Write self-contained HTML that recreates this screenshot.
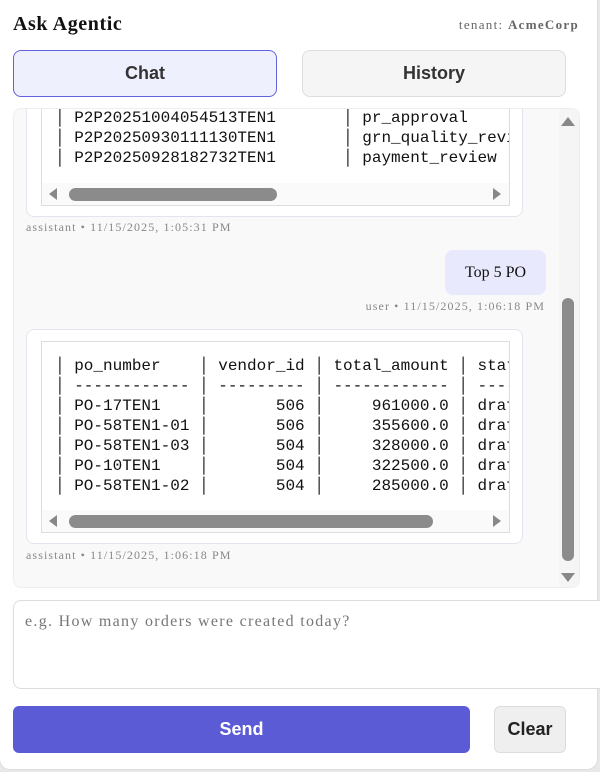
<!DOCTYPE html>
<html><head><meta charset="utf-8"><style>
*{box-sizing:border-box;margin:0;padding:0}
body{width:600px;height:772px;background:#e9e9e9;position:relative;overflow:hidden;font-family:"Liberation Serif",serif}
.panel{position:absolute;left:0;top:-10px;width:597px;height:779px;background:#fff;border-radius:10px;box-shadow:0 0 2px rgba(0,0,0,.15)}
.a{position:absolute}
.tab{position:absolute;top:50px;height:47px;border-radius:8px;font:bold 18px "Liberation Sans",sans-serif;color:#333;display:flex;align-items:center;justify-content:center}
.chat{left:13px;top:108px;width:567px;height:480px;background:#f9f9f9;border:1px solid #eee;border-radius:8px;overflow:hidden}
.bub{position:absolute;left:12px;width:497px;background:#fff;border:1px solid #e4e4ee;border-radius:8px}
.pre{position:absolute;left:14px;width:469px;border:1px solid #ddd;background:#fff;overflow:hidden}
.pre pre{font:16px/20px "Liberation Mono",monospace;color:#111;position:absolute;left:13px;white-space:pre}
.hs{position:absolute;left:0;right:0;bottom:0;height:22px;background:#fafafa}
.hs .th{position:absolute;left:27px;top:5px;height:13px;background:#8b8b8b;border-radius:7px}
.meta{position:absolute;font-size:12px;color:#888;letter-spacing:1.1px}
.tri-l{position:absolute;left:7px;top:5px;width:0;height:0;border-top:6px solid transparent;border-bottom:6px solid transparent;border-right:8px solid #888}
.tri-r{position:absolute;right:8px;top:5px;width:0;height:0;border-top:6px solid transparent;border-bottom:6px solid transparent;border-left:8px solid #888}
</style></head><body>
<div class="panel"></div>
<div class="a" style="left:13px;top:13px;font-weight:bold;font-size:20px;color:#111;letter-spacing:0.6px">Ask Agentic</div>
<div class="a" style="right:21px;top:17px;font-size:13px;color:#666;letter-spacing:1.3px">tenant: <b>AcmeCorp</b></div>
<div class="tab" style="left:13px;width:264px;background:#eff0fd;border:1px solid #6262dc">Chat</div>
<div class="tab" style="left:302px;width:264px;background:#f5f5f5;border:1px solid #ddd">History</div>
<div class="a chat">
  <div class="bub" style="top:-20px;height:128px">
    <div class="pre" style="top:0;height:116px">
      <pre style="top:17px">│ P2P20251004054513TEN1       │ pr_approval
│ P2P20250930111130TEN1       │ grn_quality_review
│ P2P20250928182732TEN1       │ payment_review</pre>
      <div class="hs"><div class="tri-l"></div><div class="th" style="width:208px"></div><div class="tri-r"></div></div>
    </div>
  </div>
  <div class="meta" style="left:12px;top:111px">assistant • 11/15/2025, 1:05:31 PM</div>
  <div class="a" style="left:431px;top:141px;width:101px;height:45px;background:#e9e9fd;border-radius:8px;font-size:16px;color:#111;display:flex;align-items:center;justify-content:center">Top 5 PO</div>
  <div class="meta" style="right:34px;top:190px">user • 11/15/2025, 1:06:18 PM</div>
  <div class="bub" style="top:220px;height:215px">
    <div class="pre" style="top:11px;height:192px">
      <pre style="top:14px">│ po_number    │ vendor_id │ total_amount │ status
│ ------------ │ --------- │ ------------ │ ------
│ PO-17TEN1    │       506 │     961000.0 │ draft
│ PO-58TEN1-01 │       506 │     355600.0 │ draft
│ PO-58TEN1-03 │       504 │     328000.0 │ draft
│ PO-10TEN1    │       504 │     322500.0 │ draft
│ PO-58TEN1-02 │       504 │     285000.0 │ draft</pre>
      <div class="hs"><div class="tri-l"></div><div class="th" style="width:364px"></div><div class="tri-r"></div></div>
    </div>
  </div>
  <div class="meta" style="left:12px;top:439px">assistant • 11/15/2025, 1:06:18 PM</div>
  <div class="a" style="right:0;top:0;width:20px;height:480px;background:#f5f5f5"></div>
  <div class="a" style="left:547px;top:8px;width:0;height:0;border-left:7px solid transparent;border-right:7px solid transparent;border-bottom:9px solid #888"></div>
  <div class="a" style="left:548px;top:189px;width:12px;height:263px;background:#8b8b8b;border-radius:6px"></div>
  <div class="a" style="left:547px;top:464px;width:0;height:0;border-left:7px solid transparent;border-right:7px solid transparent;border-top:9px solid #888"></div>
</div>
<div class="a" style="left:13px;top:600px;width:600px;height:89px;border:1px solid #ddd;border-radius:8px;background:#fff"></div>
<div class="a" style="left:25px;top:613px;font-size:16px;color:#777;letter-spacing:1.3px">e.g. How many orders were created today?</div>
<div class="a" style="left:13px;top:706px;width:457px;height:47px;background:#5b5bd6;border-radius:6px;color:#fff;font:bold 18px 'Liberation Sans',sans-serif;display:flex;align-items:center;justify-content:center">Send</div>
<div class="a" style="left:494px;top:706px;width:72px;height:47px;background:#efefef;border:1px solid #ddd;border-radius:6px;color:#222;font:bold 18px 'Liberation Sans',sans-serif;display:flex;align-items:center;justify-content:center">Clear</div>
</body></html>
